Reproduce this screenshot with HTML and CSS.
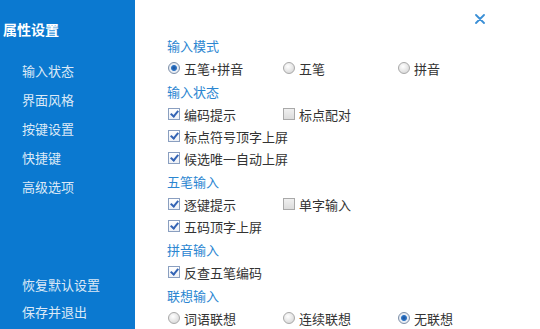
FILE: index.html
```html
<!DOCTYPE html>
<html lang="zh">
<head>
<meta charset="utf-8">
<link rel="stylesheet" href="styles.css">
</head>
<body>
<div class="app">
  <aside class="side">
    <div class="title">属性设置</div>
    <nav class="nav">
      <div class="nav-item">输入状态</div>
      <div class="nav-item">界面风格</div>
      <div class="nav-item">按键设置</div>
      <div class="nav-item">快捷键</div>
      <div class="nav-item">高级选项</div>
    </nav>
    <div class="nav-bottom">
      <div class="nav-item">恢复默认设置</div>
      <div class="nav-item">保存并退出</div>
    </div>
  </aside>
  <main class="main">
    <div class="close">
      <svg width="10" height="10" viewBox="0 0 10 10"><path d="M1 1L9 9M9 1L1 9" stroke="#3a8fd6" stroke-width="1.8" stroke-linecap="round"/></svg>
    </div>
    <div class="sec">输入模式</div>
    <div class="row">
      <label class="opt"><span class="radio on"></span>五笔+拼音</label>
      <label class="opt"><span class="radio"></span>五笔</label>
      <label class="opt"><span class="radio"></span>拼音</label>
    </div>
    <div class="sec">输入状态</div>
    <div class="row">
      <label class="opt"><span class="check on"></span>编码提示</label>
      <label class="opt"><span class="check"></span>标点配对</label>
    </div>
    <div class="row">
      <label class="opt wide"><span class="check on"></span>标点符号顶字上屏</label>
    </div>
    <div class="row">
      <label class="opt wide"><span class="check on"></span>候选唯一自动上屏</label>
    </div>
    <div class="sec">五笔输入</div>
    <div class="row">
      <label class="opt"><span class="check on"></span>逐键提示</label>
      <label class="opt"><span class="check"></span>单字输入</label>
    </div>
    <div class="row">
      <label class="opt wide"><span class="check on"></span>五码顶字上屏</label>
    </div>
    <div class="sec">拼音输入</div>
    <div class="row">
      <label class="opt wide"><span class="check on"></span>反查五笔编码</label>
    </div>
    <div class="sec">联想输入</div>
    <div class="row">
      <label class="opt"><span class="radio"></span>词语联想</label>
      <label class="opt"><span class="radio"></span>连续联想</label>
      <label class="opt"><span class="radio on"></span>无联想</label>
    </div>
  </main>
</div>
</body>
</html>
```
FILE: styles.css
```css
html, body {
  margin: 0;
  padding: 0;
  background: #ffffff;
}
body {
  font-family: "Noto Sans CJK SC", "Microsoft YaHei", sans-serif;
  font-size: 13px;
  color: #333333;
}
.app {
  display: flex;
  width: 540px;
  height: 329px;
  overflow: hidden;
}
.side {
  width: 135px;
  flex: none;
  background: #0b79d0;
  display: flex;
  flex-direction: column;
  color: #dce9f7;
}
.title {
  font-size: 14px;
  font-weight: bold;
  color: #ffffff;
  padding: 19px 0 0 3px;
  line-height: 20px;
}
.nav {
  padding-top: 17px;
  display: flex;
  flex-direction: column;
}
.nav-item {
  padding-left: 22px;
  height: 29px;
  line-height: 29px;
}
.nav-bottom {
  margin-top: auto;
  padding-bottom: 4px;
  display: flex;
  flex-direction: column;
}
.nav-bottom .nav-item {
  height: 27px;
  line-height: 27px;
}
.main {
  flex: 1;
  position: relative;
  padding: 33px 0 0 32px;
}
.close {
  position: absolute;
  left: 340px;
  top: 14px;
  width: 10px;
  height: 10px;
}
.close svg { display: block; }
.sec {
  color: #2b86d1;
  height: 22px;
  line-height: 22px;
  margin-top: 2px;
}
.main .sec:first-of-type { margin-top: 0; }
.row {
  display: flex;
  height: 22px;
  align-items: center;
}
.opt {
  width: 115px;
  display: flex;
  align-items: center;
  white-space: nowrap;
  color: #333;
}
.opt.wide { width: auto; }
.check {
  width: 10px;
  height: 10px;
  border: 1px solid #a9a9a9;
  background: linear-gradient(#f0f0f0, #dcdcdc);
  margin: 0 4px 0 1px;
  flex: none;
  position: relative;
}
.check.on {
  border-color: #8a9fc0;
  background: linear-gradient(#ffffff, #eef1f6);
}
.check.on::after {
  content: "";
  position: absolute;
  left: 3px;
  top: 0px;
  width: 3px;
  height: 6px;
  border: solid #3464b4;
  border-width: 0 2px 2px 0;
  transform: rotate(40deg);
}
.radio {
  width: 10px;
  height: 10px;
  border-radius: 50%;
  border: 1px solid #a8a8a8;
  background: radial-gradient(circle at 40% 35%, #ffffff, #d0d0d0);
  margin: 0 4px 0 1px;
  flex: none;
  position: relative;
}
.radio.on {
  border-color: #7d8fa8;
  background: radial-gradient(circle at 50% 50%, #1b4f98 0, #2f76c6 2.5px, #e9eef5 3.5px, #e0e4ea 100%);
}
```
